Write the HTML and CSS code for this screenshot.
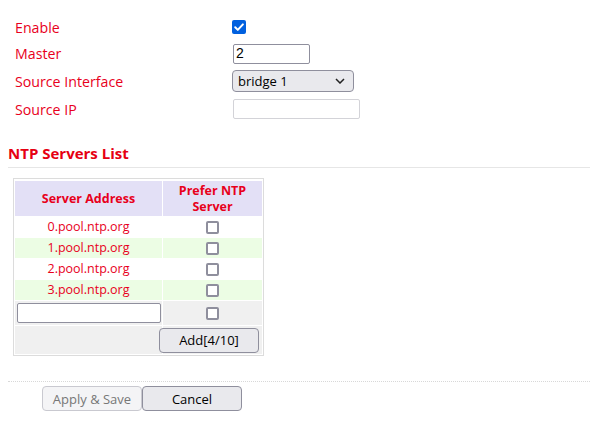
FILE: index.html
```html
<!DOCTYPE html>
<html>
<head>
<meta charset="utf-8">
<link rel="stylesheet" href="styles.css">
</head>
<body>
<div class="form">
  <div class="row r1">
    <span class="label">Enable</span>
    <span class="cb checked"><svg viewBox="0 0 14 14" width="14" height="14"><path d="M3.2 7.3 L5.8 9.9 L10.9 4.4" fill="none" stroke="#fff" stroke-width="2" stroke-linecap="round" stroke-linejoin="round"/></svg></span>
  </div>
  <div class="row">
    <span class="label">Master</span>
    <span class="text master">2</span>
  </div>
  <div class="row">
    <span class="label">Source Interface</span>
    <span class="select">bridge 1<svg class="chev" viewBox="0 0 10 6" width="10" height="6"><path d="M1 1 L5 5 L9 1" fill="none" stroke="#222" stroke-width="1.5"/></svg></span>
  </div>
  <div class="row">
    <span class="label">Source IP</span>
    <span class="text ip"></span>
  </div>
</div>

<h3 class="section">NTP Servers List</h3>

<div class="tablewrap">
<table class="servers">
  <thead>
    <tr><th class="c1">Server Address</th><th class="c2">Prefer NTP<br>Server</th></tr>
  </thead>
  <tbody>
    <tr class="odd"><td>0.pool.ntp.org</td><td><span class="cb"></span></td></tr>
    <tr class="even"><td>1.pool.ntp.org</td><td><span class="cb"></span></td></tr>
    <tr class="odd"><td>2.pool.ntp.org</td><td><span class="cb"></span></td></tr>
    <tr class="even"><td>3.pool.ntp.org</td><td><span class="cb"></span></td></tr>
    <tr class="grey inrow"><td><span class="text addr"></span></td><td><span class="cb"></span></td></tr>
    <tr class="grey addrow"><td></td><td><span class="btn add">Add[4/10]</span></td></tr>
  </tbody>
</table>
</div>

<div class="footer">
  <span class="btn apply">Apply &amp; Save</span><span class="btn cancel">Cancel</span>
</div>
</body>
</html>
```
FILE: styles.css
```css
html, body { margin: 0; padding: 0; background: #fff; }
body {
  padding: 8px;
  font-family: "Open Sans", "Noto Sans", sans-serif;
  color: #e60012;
}
.form {
  display: grid;
  grid-template-columns: 217px 1fr;
  grid-template-rows: 26px 27px 28px 28px;
  padding-left: 7px;
  margin-top: 6px;
}
.row { display: contents; }
.label {
  display: flex;
  align-items: center;
  font-size: 14.2px;
  font-weight: 500;
  color: #e8001c;
}
.row > * { align-self: center; }
.cb {
  display: inline-block;
  box-sizing: border-box;
  width: 13px;
  height: 13px;
  border: 2px solid #8f8f9d;
  border-radius: 2px;
  background: #fff;
  vertical-align: middle;
}
.cb.checked {
  width: 14px;
  height: 14px;
  border: 0;
  background: #0060df;
  border-radius: 2px;
  display: flex;
}
.text {
  display: block;
  box-sizing: border-box;
  border: 1px solid #8f8f9d;
  border-radius: 2px;
  background: #fff;
  font-family: "Liberation Sans", "Open Sans", sans-serif;
  font-size: 14px;
  color: #000;
  padding: 0 2px;
  line-height: 17px;
}
.master { width: 77px; height: 20px; margin-left: 1px; }
.ip { width: 127px; height: 20px; margin-left: 1px; border-color: #d3d3d8; }
.select {
  display: flex;
  align-items: center;
  justify-content: space-between;
  box-sizing: border-box;
  width: 122px;
  height: 22px;
  border: 1px solid #8f8f9d;
  border-radius: 4px;
  background: #e9e9ed;
  color: #000;
  font-family: "Open Sans", sans-serif;
  font-size: 13px;
  padding: 0 8px 0 5px;
}
.chev { display: block; }
.section {
  margin: 20px -8px 0 0;
  padding-bottom: 4px;
  font-size: 15px;
  font-weight: 700;
  color: #e60012;
  border-bottom: 1px solid #e6e6e6;
  line-height: 20px;
}
.tablewrap {
  margin: 10px 0 0 5px;
  padding-top: 1px;
  width: 249px;
  border: 1px solid #dcdcdc;
}
.servers {
  border-collapse: separate;
  border-spacing: 1px;
  width: 249px;
  font-size: 12.5px;
  table-layout: fixed;
}
.servers th {
  background: #e3e0f6;
  color: #e8001c;
  font-weight: 700;
  height: 35px;
  padding: 0;
  line-height: 16px;
}
.servers .c1 { width: 147px; }
.servers td {
  text-align: center;
  padding: 0;
  height: 20px;
  line-height: 16px;
  color: #e8001c;
}
.servers td .cb { display: block; margin: 0 auto; }
.odd td { background: #fff; }
.even td { background: #ecfde4; }
.grey td { background: #f0f0f0; }
.inrow td { height: 24px; }
.addrow td { height: 28px; }
.addr { width: 144px; height: 20px; margin-left: 2px; }
.btn {
  display: inline-flex;
  align-items: center;
  justify-content: center;
  box-sizing: border-box;
  width: 100px;
  height: 25px;
  border: 1px solid #8f8f9d;
  border-radius: 4px;
  background: #e9e9ed;
  color: #000;
  font-family: "Open Sans", sans-serif;
  font-size: 13px;
}
.add { margin: 0 0 0 -4px; display: flex; }
.footer {
  margin: 25px -8px 0 0;
  border-top: 1px dotted #d8d8d8;
  padding: 4px 0 0 34px;
  display: flex;
}
.apply {
  background: #f4f4f6;
  border-color: #c9c9d0;
  color: #777;
}
```
